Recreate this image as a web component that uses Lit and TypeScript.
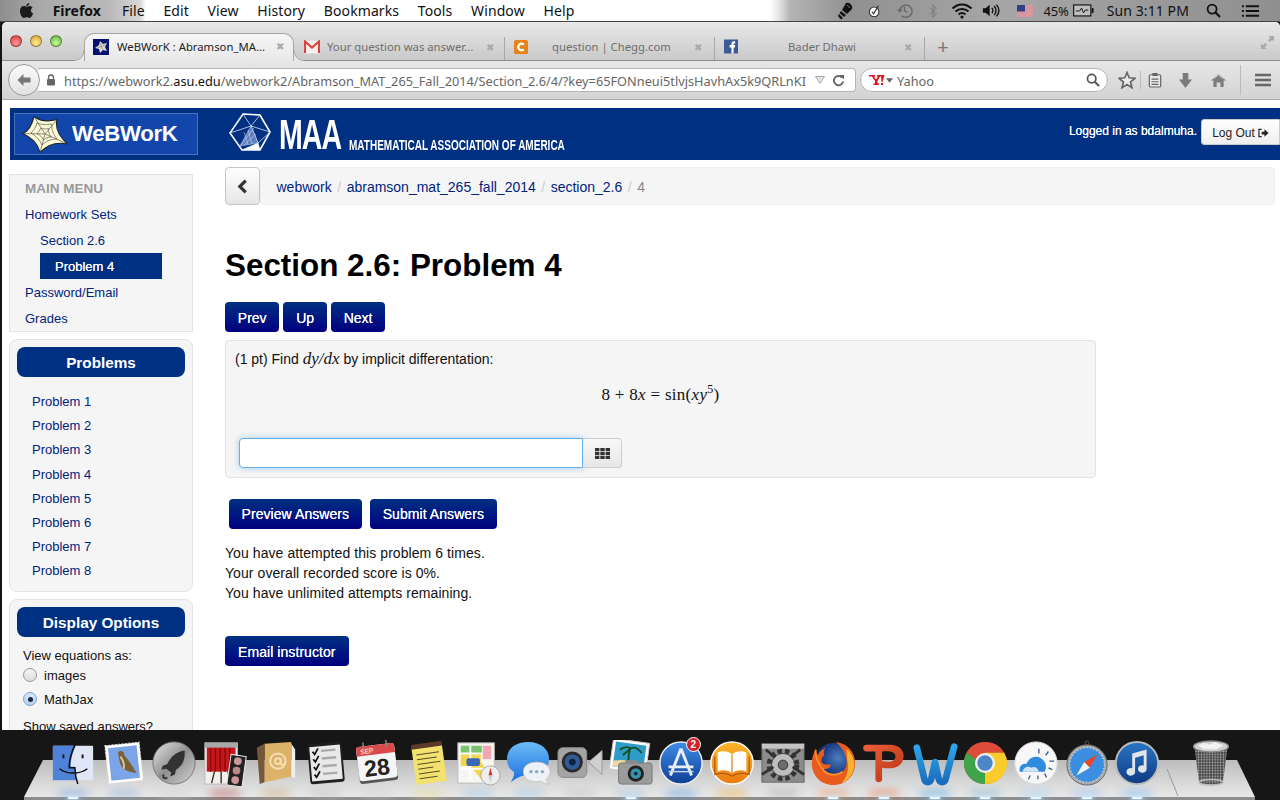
import { LitElement, html, css, svg } from "lit";
import { customElement } from "lit/decorators.js";

const x = (cls = "") => html`<span class="tabx ${cls}">✖</span>`;

const star = html`<svg class="star" viewBox="0 0 46 37" width="46" height="37">
  <path d="M.5 17.500 C6 15.500 10 9 12 .5 C18 5 26 6 35 3.500 C33 11 37 20 45.500 28 C36 26 26 28 18 36.500 C16 28 9 21 .5 17.500Z" fill="#fbf8d4" stroke="#1c2430" stroke-width="1.100"/>
  <path d="M.5 17.500 L23 18 M12 .5 L23 18 M35 3.500 L23 18 M45.500 28 L23 18 M18 36.500 L23 18" fill="none" stroke="#444" stroke-width=".6"/>
  <path d="M9 17 C12 14 14 11 15 7 C20 9 24 9 30 8 C29 13 31 18 35 23 C29 23 24 25 20 29 C18 24 14 20 9 17Z M15 17.500 C17 16 18 14 18.500 12.500 C21 13 24 13 26.500 12.500 C26 15 27 18 29 21 C26 21 24 22 21.500 24 C20 21 18 19 15 17.500Z" fill="none" stroke="#444" stroke-width=".6"/>
</svg>`;

const maaPoly = html`<svg viewBox="0 0 44 44" width="44" height="44">
  <path d="M15 2 L32 3 L42 20 L32 38 L14 38 L2 21Z" fill="none" stroke="#fff" stroke-width="1.600"/>
  <path d="M15 2 L23 14 L42 20 M23 14 L2 21 M23 14 L30 31 L42 20 M30 31 L14 38 M30 31 L32 38 M15 2 L2 21 M32 3 L23 14 M2 21 L14 38" fill="none" stroke="#d4def0" stroke-width=".8"/>
  <path d="M23 14 L30 31 L12 34 Z M26 16 L13 33 M28 22 L16 33 M20 18 L24 32 M16 20 L20 33" fill="#5f7fc0" stroke="#dbe3f2" stroke-width=".5"/>
  <path d="M14 38 L30 31 L32 38Z" fill="#fff"/>
</svg>`;

const apple = html`<svg viewBox="0 0 16 18" width="15" height="17"><path d="M11 1c0 2-1.600 3.500-3.300 3.400C7.600 2.600 9.300 1.100 11 1zM8 5c1 0 2-.9 3.400-.9 1.200 0 2.400.6 3.100 1.700-2.700 1.600-2.200 5.300.6 6.400-.7 2-2.300 4.700-4 4.700-1 0-1.500-.7-2.800-.7s-1.900.7-2.900.7C3.400 16.900 1 13 1 9.700 1 6.400 3.100 4.300 5.200 4.300 6.400 4.300 7.200 5 8 5z" fill="#1b1b1b"/></svg>`;

const statusIcons = [
  html`<svg viewBox="0 0 18 18" width="18" height="18"><path d="M9 1 C12 0 16 3 15 7 L10 12 L5 8Z" fill="#111"/><path d="M4 9 L9 13 L7 15 L2.500 11Z M2 12 L6 16 L4 17.500 L1 14Z" fill="#111"/><path d="M10 3 L13 6" stroke="#999" stroke-width=".8"/></svg>`,
  html`<svg viewBox="0 0 16 16" width="14" height="14"><circle cx="7" cy="9" r="5.500" fill="#f4f4f4" stroke="#333" stroke-width="1.200"/><path d="M4.500 9 L6.500 11 L12 2" fill="none" stroke="#333" stroke-width="1.400"/></svg>`,
  html`<svg viewBox="0 0 18 18" width="17" height="17"><path d="M4 9 A6.500 6.500 0 1 1 6 14.500" fill="none" stroke="#666" stroke-width="1.500"/><path d="M9 5 V9.500 L12 11" fill="none" stroke="#666" stroke-width="1.300"/><path d="M1 8 L4 11 L7 8Z" fill="#666"/></svg>`,
  html`<svg viewBox="0 0 10 18" width="9" height="16"><path d="M1 5 L8 12 L4.500 16 V2 L8 6 L1 13" fill="none" stroke="#777" stroke-width="1.100"/></svg>`,
  html`<svg viewBox="0 0 22 16" width="22" height="16"><path d="M1.500 5.500 C7 0 15 0 20.500 5.500 M4.500 8.500 C8 5 14 5 17.500 8.500 M7.500 11.500 C9.500 9.800 12.500 9.800 14.500 11.500" fill="none" stroke="#111" stroke-width="2"/><circle cx="11" cy="14" r="1.600" fill="#111"/></svg>`,
  html`<svg viewBox="0 0 20 16" width="18" height="15"><path d="M1 5.500 H4 L8.500 1.500 V14.500 L4 10.500 H1Z" fill="#111"/><path d="M11 5 C12.500 7 12.500 9 11 11 M13.500 3 C16 6 16 10 13.500 13 M16 1.500 C19.500 5.500 19.500 10.500 16 14.500" fill="none" stroke="#111" stroke-width="1.500"/></svg>`,
];

const flag = html`<svg viewBox="0 0 16 12" width="16" height="12"><rect width="16" height="12" fill="#f4f4f4"/><path d="M0 1h16M0 3h16M0 5h16M0 7h16M0 9h16M0 11h16" stroke="#c0394b" stroke-width="1"/><rect width="8" height="6.500" fill="#2f3f85"/></svg>`;
const battery = html`<svg viewBox="0 0 22 13" width="21" height="13"><rect x=".7" y=".7" width="18" height="11.500" fill="#eee" fill-opacity=".4" stroke="#111" stroke-width="1.200"/><rect x="19.500" y="4" width="2" height="5" fill="#111"/><path d="M3 7 H7 L9 4 L11 9 L13 6 H16" fill="none" stroke="#111" stroke-width="1"/></svg>`;
const searchBlack = html`<svg viewBox="0 0 16 16" width="15" height="15"><circle cx="6.500" cy="6.500" r="4.800" fill="none" stroke="#111" stroke-width="1.900"/><path d="M10 10 L15 15" stroke="#111" stroke-width="2.300"/></svg>`;
const listIcon = html`<svg viewBox="0 0 20 14" width="19" height="14"><path d="M1 2h2M1 7h2M1 12h2M5 2h14M5 7h14M5 12h14" stroke="#111" stroke-width="2.200"/></svg>`;

const favWeb = html`<svg viewBox="0 0 16 16" width="16" height="16"><rect width="16" height="16" fill="#06106e"/><path d="M2 9 L6 6 L7 2 L10 5 L14 4 L12 8 L14 12 L10 11 L7 14 L6 10Z" fill="#dcdccc"/><path d="M4 9 L12 6 M7 4 L10 11" stroke="#666" stroke-width=".5"/></svg>`;
const favGmail = html`<svg viewBox="0 0 16 14" width="16" height="14"><rect x=".5" y=".5" width="15" height="13" fill="#f4f1ee" stroke="#ddd"/><path d="M1 13 V1.500 L8 7.500 L15 1.500 V13" fill="none" stroke="#d9463d" stroke-width="2.200"/></svg>`;
const favChegg = html`<svg viewBox="0 0 15 15" width="14" height="14"><rect width="15" height="15" rx="2" fill="#e8831a"/><path d="M10.500 5 A3.500 3.500 0 1 0 10.500 10" fill="none" stroke="#fff" stroke-width="2.400"/></svg>`;
const favFb = html`<svg viewBox="0 0 15 15" width="14" height="15"><rect width="15" height="15" fill="#3b5a9a"/><path d="M8 15 V8.500 H6 V6 H8 V4.500 C8 2.800 9 2 10.500 2 H12 V4.300 H11 C10.400 4.300 10.300 4.600 10.300 5 V6 H12 L11.700 8.500 H10.300 V15Z" fill="#fff"/></svg>`;
const fullscreen = html`<svg viewBox="0 0 16 16" width="15" height="15"><path d="M9 1 H15 V7 L13 5 L10.500 7.500 L8.500 5.500 L11 3Z M7 15 H1 V9 L3 11 L5.500 8.500 L7.500 10.500 L5 13Z" fill="#a9a9a9"/></svg>`;

const backArrow = html`<svg viewBox="0 0 16 16" width="16" height="16"><path d="M7.500 2 L1.500 8 L7.500 14 V10.500 H14.500 V5.500 H7.500Z" fill="#777"/></svg>`;
const lock = html`<svg viewBox="0 0 10 12" width="10" height="12"><path d="M2.500 5 V3.500 A2.500 2.500 0 0 1 7.500 3.500 V5" fill="none" stroke="#666" stroke-width="1.300"/><rect x="1" y="5" width="8" height="6.500" rx="1" fill="#666"/></svg>`;
const dropTri = html`<svg viewBox="0 0 10 8" width="10" height="8"><path d="M.5 .5 H9.500 L5 7.500Z" fill="#e4e4e4" stroke="#aaa"/></svg>`;
const reload = html`<svg viewBox="0 0 14 14" width="13" height="13"><path d="M11 4 A5 5 0 1 0 12 8" fill="none" stroke="#666" stroke-width="2"/><path d="M8 1 L13 1 L13 6Z" fill="#666"/></svg>`;
const yahoo = html`<svg viewBox="0 0 16 10" width="16" height="10"><path d="M0 0 H6 V1.500 H5 L7 4.500 L9 1.500 H8 V0 H12 V1.500 H11 L8.500 6 V8.500 H10 V10 H4.500 V8.500 H6 V6 L3 1.500 H0Z" fill="#d8141c"/><path d="M12 0 H15.500 L13.500 7 H12.500Z" fill="#d8141c"/><rect x="12" y="8" width="2" height="2" fill="#d8141c"/></svg>`;
const yahooCaret = html`<svg viewBox="0 0 8 5" width="7" height="5"><path d="M0 0 H8 L4 5Z" fill="#666"/></svg>`;
const searchGrey = html`<svg viewBox="0 0 16 16" width="14" height="14"><circle cx="6.500" cy="6.500" r="4.800" fill="none" stroke="#555" stroke-width="2"/><path d="M10 10 L15 15" stroke="#555" stroke-width="2.400"/></svg>`;
const starIcon = html`<svg viewBox="0 0 18 18" width="18" height="18"><path d="M9 1.500 L11.200 6.800 L17 7.200 L12.500 11 L14 16.700 L9 13.600 L4 16.700 L5.500 11 L1 7.200 L6.800 6.800Z" fill="#ececec" stroke="#666" stroke-width="1.700"/></svg>`;
const clipboard = html`<svg viewBox="0 0 16 18" width="14" height="16"><rect x="1.500" y="3" width="13" height="14" rx="1.500" fill="#e8e8e8" stroke="#666" stroke-width="1.400"/><rect x="5" y="1" width="6" height="3.500" fill="#666"/><path d="M4 8h8M4 11h8M4 14h8" stroke="#666" stroke-width="1.300"/></svg>`;
const download = html`<svg viewBox="0 0 16 18" width="15" height="17"><path d="M5 1 H11 V8 H15 L8 17 L1 8 H5Z" fill="#7a7a7a"/></svg>`;
const home = html`<svg viewBox="0 0 18 16" width="17" height="15"><path d="M9 1 L1 8 H3.500 V15 H7 V10 H11 V15 H14.500 V8 H17Z" fill="#7d7d7d"/><path d="M4 6 L9 2 L14 6" stroke="#e8e8e8" fill="none" stroke-width=".8"/></svg>`;
const burger = html`<svg viewBox="0 0 16 14" width="16" height="14"><path d="M0 2h16M0 7h16M0 12h16" stroke="#666" stroke-width="2.400"/></svg>`;

const d = (body: unknown) => html`<svg viewBox="0 0 48 48" width="46" height="46">${body}</svg>`;
const dockIcons = [
  { c: "#5a8fd8", on: true, i: d(svg`<rect x="3" y="6" width="42" height="36" rx="1" fill="#dfe6f6"/><path d="M3 6 H27 C23 14 21 23 22 28 H26 C26 34 27 38 28 42 H3Z" fill="#4f83d8"/><path d="M27 3 C22 13 20 22 20 29 H26 C26 35 27 40 29 46" fill="none" stroke="#111" stroke-width="1.600"/><path d="M14 15 v4 M34 15 v4" stroke="#111" stroke-width="2"/><path d="M10 30 C17 36 31 36 39 30" fill="none" stroke="#111" stroke-width="1.500"/>`) },
  { c: "#7aa2e0", on: false, i: d(svg`<g transform="rotate(-6 24 24)"><rect x="6" y="4" width="36" height="40" fill="#fff" stroke="#ddd" stroke-dasharray="2 1.500"/><rect x="9" y="7" width="30" height="34" fill="#7ba5e6"/><path d="M19 12 C23 10 26 12 25 16 C30 22 33 30 36 36 C30 34 26 33 23 30 C20 28 19 20 19 12Z" fill="#7b6038"/><path d="M21 17 C24 22 24 27 23 30" stroke="#d6c7a5" stroke-width="2" fill="none"/></g>`) },
  { c: "#ccc", on: false, i: d(svg`<defs><linearGradient id="lp" x1="0" y1="0" x2="1" y2="1"><stop offset="0" stop-color="#e8e8e8"/><stop offset=".5" stop-color="#8f8f8f"/><stop offset="1" stop-color="#d4d4d4"/></linearGradient></defs><circle cx="24" cy="24" r="22" fill="url(#lp)" stroke="#777"/><path d="M35 11 C27 12 21 17 17 25 L12 27 L11 31 L16 30 L21 34 L20 38 L25 36 L26 31 C33 27 36 20 35 11Z" fill="#333"/><path d="M13 36 C12 40 15 41 17 39" fill="none" stroke="#333" stroke-width="2"/>`) },
  { c: "#a33", on: false, i: d(svg`<rect x="3" y="3" width="34" height="43" fill="#f0f0ee" stroke="#bbb"/><rect x="5" y="7" width="30" height="26" fill="#c8171b"/><path d="M9 7v26M14 7v26M19 7v26M24 7v26M29 7v26" stroke="#87090c" stroke-width="1.500"/><rect x="3" y="3" width="34" height="5" fill="#a8a8a8"/><path d="M13 33 L10 45 M27 33 L30 45 M20 33 V45" stroke="#432" stroke-width="1.500"/><g transform="rotate(8 36 32)"><rect x="28" y="16" width="16" height="32" fill="#222" stroke="#eee"/><circle cx="36" cy="22" r="4" fill="#c99"/><circle cx="36" cy="32" r="4" fill="#b88"/><circle cx="36" cy="42" r="4" fill="#c99"/></g>`) },
  { c: "#c9a05c", on: false, i: d(svg`<path d="M12 4 L40 2 V38 L12 44 Z" fill="#dcb269"/><path d="M4 8 L12 4 V44 L7 46 Z" fill="#75583c"/><path d="M40 4 L44 10 V40 L40 38Z" fill="#eee"/><circle cx="26" cy="22" r="8" fill="none" stroke="#f3dfb3" stroke-width="2"/><circle cx="26" cy="22" r="3" fill="none" stroke="#f3dfb3" stroke-width="2"/><path d="M29 19 V25 C31 27 34 25 34 22" fill="none" stroke="#f3dfb3" stroke-width="2"/>`) },
  { c: "#bbb", on: false, i: d(svg`<g transform="rotate(-5 24 24)"><rect x="6" y="3" width="36" height="42" rx="3" fill="#1e1e1e"/><rect x="8" y="6" width="32" height="36" fill="#e9e9e9"/><path d="M20 11h15M20 19h15M20 27h15M20 35h15" stroke="#aaa" stroke-width="2.500"/><path d="M11 11 l2 3 l4 -6 M11 19 l2 3 l4 -6 M11 27 l2 3 l4 -6 M11 35 l2 3 l4 -6" fill="none" stroke="#111" stroke-width="1.800"/></g>`) },
  { c: "#ccc", on: false, i: d(svg`<g transform="rotate(-7 24 24)"><rect x="4" y="6" width="40" height="38" rx="3" fill="#555"/><rect x="4" y="5" width="40" height="36" rx="3" fill="#f5f5f5"/><path d="M4 15 V8 a3 3 0 0 1 3 -3 H41 a3 3 0 0 1 3 3 V15Z" fill="#d94b4b"/><path d="M12 1v7M36 1v7" stroke="#888" stroke-width="1.500"/><text x="8" y="13" font-size="7" fill="#fff" font-family="Liberation Sans">SEP</text><text x="10" y="37" font-size="24" font-weight="700" fill="#222" font-family="Liberation Sans">28</text></g>`) },
  { c: "#e8d97a", on: false, i: d(svg`<g transform="rotate(-8 24 24)"><rect x="9" y="7" width="32" height="38" fill="#f4e26e"/><rect x="9" y="3" width="32" height="5" fill="#5b3a2a"/><path d="M13 14h24M13 19h21M13 24h24M13 29h16M13 34h22M13 39h19" stroke="#564f2a" stroke-width="1"/></g>`) },
  { c: "#8bc1e8", on: false, i: d(svg`<rect x="3" y="3" width="38" height="42" fill="#f6f6f2" stroke="#bbb"/><rect x="6" y="6" width="22" height="7" fill="#79c46c"/><rect x="29" y="6" width="9" height="14" fill="#f2a7b5"/><path d="M6 15 H27 V23 L37 36 V42 H28 L16 27 H6Z" fill="#f3d64b"/><path d="M16 6 V42 M6 30 H30" stroke="#fff" stroke-width="2"/><rect x="12" y="19" width="14" height="8" rx="2" fill="#3a68b8"/><circle cx="37" cy="37" r="10" fill="#eee" stroke="#aaa"/><path d="M37 29 L39 37 H35Z" fill="#d8332a"/><path d="M37 45 L39 37 H35Z" fill="#ccc"/>`) },
  { c: "#8bc1e8", on: false, i: d(svg`<defs><linearGradient id="ms" x1="0" y1="0" x2="0" y2="1"><stop offset="0" stop-color="#6cbcf7"/><stop offset="1" stop-color="#1a6fdb"/></linearGradient></defs><path d="M23 2 C36 2 45 9 45 20 C45 31 35 37 22 37 C17 37 13 38 5 44 C8 39 9 36 8 33 C3 30 1 25 1 20 C1 9 10 2 23 2Z" fill="url(#ms)"/><path d="M32 23 C40 23 46 27 46 33 C46 37 44 39 42 41 C42 43 43 45 45 46 C41 46 39 45 37 43 C28 45 18 42 18 33 C18 27 24 23 32 23Z" fill="#eef1f5" stroke="#bbb" stroke-width=".7"/><circle cx="26" cy="33" r="1.800" fill="#8ca9c9"/><circle cx="32" cy="33" r="1.800" fill="#8ca9c9"/><circle cx="38" cy="33" r="1.800" fill="#8ca9c9"/>`) },
  { c: "#bbb", on: false, i: d(svg`<rect x="1" y="8" width="30" height="31" rx="5" fill="#a4a4a4" stroke="#888"/><circle cx="16" cy="23" r="11" fill="#2a2a2a"/><circle cx="16" cy="23" r="8" fill="#2f5c97"/><circle cx="16" cy="23" r="3.500" fill="#0c2343"/><path d="M33 23 L47 11 V36Z" fill="#cfcfcf" stroke="#999"/>`) },
  { c: "#9bd", on: true, i: d(svg`<g transform="rotate(8 24 20)"><rect x="3" y="1" width="38" height="32" fill="#fff" stroke="#ccc"/><rect x="6" y="4" width="32" height="26" fill="#2f9bc9"/><path d="M6 24 C16 21 28 21 38 24 V30 H6Z" fill="#e9d9a0"/><path d="M22 24 C21 18 20 13 22 9 M22 9 C18 7 14 9 11 12 M22 9 C26 6 30 8 34 12 M22 9 C20 12 17 15 15 17" stroke="#14501f" stroke-width="2" fill="none"/></g><rect x="11" y="24" width="35" height="22" rx="3" fill="#9b9b9b" stroke="#777"/><rect x="18" y="21" width="12" height="4" fill="#8a8a8a"/><circle cx="29" cy="35" r="8.500" fill="#222"/><circle cx="29" cy="35" r="5.500" fill="#3a93ad"/><circle cx="29" cy="35" r="2" fill="#0b2c40"/>`) },
  { c: "#3b8de0", on: false, i: d(svg`<defs><linearGradient id="as" x1="0" y1="0" x2="0" y2="1"><stop offset="0" stop-color="#3d8de8"/><stop offset="1" stop-color="#103e96"/></linearGradient></defs><circle cx="24" cy="24" r="22" fill="url(#as)" stroke="#eee" stroke-width="1.500"/><path d="M24 9 L13 37 M24 9 L35 37 M11 28 H37" stroke="#e7eef7" stroke-width="3" fill="none"/><path d="M11 33 H37" stroke="#cad6e6" stroke-width="1.500"/>`) },
  { c: "#f5a020", on: false, i: d(svg`<defs><linearGradient id="ib" x1="0" y1="0" x2="0" y2="1"><stop offset="0" stop-color="#fbb62a"/><stop offset="1" stop-color="#ea7a10"/></linearGradient></defs><circle cx="24" cy="24" r="22" fill="url(#ib)" stroke="#fff" stroke-width="1.500"/><path d="M24 15 C20 11 14 11 9 13 V33 C14 31 20 31 24 35 C28 31 34 31 39 33 V13 C34 11 28 11 24 15Z" fill="#fff"/><path d="M24 15 V35" stroke="#d8751a" stroke-width="1.200"/><path d="M6 17 V36 C13 34 19 34 24 38 C29 34 35 34 42 36 V17" fill="none" stroke="#b35a10" stroke-width="1.200"/>`) },
  { c: "#999", on: false, i: d(svg`<rect x="2" y="4" width="44" height="40" fill="#8c8c8c" stroke="#666"/><rect x="2" y="4" width="44" height="5" fill="#c4c4c4"/><circle cx="24" cy="26" r="14" fill="none" stroke="#333" stroke-width="6" stroke-dasharray="4.500 3"/><circle cx="24" cy="26" r="12" fill="#bdbdbd" stroke="#444"/><circle cx="24" cy="26" r="5" fill="#6c6c6c" stroke="#333"/><path d="M2 36 L14 28 M46 36 L34 28 M6 10 L16 18 M42 10 L32 18" stroke="#333" stroke-width="3"/>`) },
  { c: "#f08040", on: true, i: d(svg`<defs><radialGradient id="ff" cx=".6" cy=".4" r=".7"><stop offset="0" stop-color="#4c7ec0"/><stop offset=".55" stop-color="#1d3e85"/><stop offset="1" stop-color="#0f2458"/></radialGradient></defs><circle cx="25" cy="23" r="20" fill="url(#ff)"/><path d="M27 2 C38 3 48 12 47 26 C46 39 36 47 24 47 C11 47 1 36 2 23 C2 18 4 13 6 10 C6 13 7 15 8 16 C10 12 13 10 16 8 C14 12 14 14 15 16 C12 18 11 22 13 24 C15 26 18 26 21 25 C23 29 17 31 13 30 C17 37 28 38 34 33 C41 27 40 14 27 2Z" fill="#ea5b1f"/><path d="M38 9 C45 15 48 24 45 32 C43 38 38 43 33 45 C39 38 41 30 39 22 Z" fill="#f6b331"/><path d="M6 10 C5 20 10 26 13 30 C17 37 28 38 34 33" fill="none" stroke="#f4922a" stroke-width="2"/>`) },
  { c: "#e25a28", on: true, i: d(svg`<defs><linearGradient id="pp" x1="0" y1="0" x2="1" y2="1"><stop offset="0" stop-color="#f0603a"/><stop offset="1" stop-color="#b73213"/></linearGradient></defs><path d="M6 5 H30 C42 5 46 13 44 20 C42 28 34 31 22 29 L22 41 C22 45 15 45 15 41 L15 12 H6 C1 12 1 5 6 5Z M22 12 V22 C31 24 36 22 36 17 C36 13 31 11 22 12Z" fill="url(#pp)"/>`) },
  { c: "#2f9be0", on: true, i: d(svg`<defs><linearGradient id="ww" x1="0" y1="0" x2="0" y2="1"><stop offset="0" stop-color="#2ba5e8"/><stop offset="1" stop-color="#1a6cbc"/></linearGradient></defs><path d="M5 8 L13 41 C14 45 19 45 20 41 L24 23 L28 41 C29 45 34 45 35 41 L44 7" fill="none" stroke="url(#ww)" stroke-width="7" stroke-linecap="round" stroke-linejoin="round"/>`) },
  { c: "#6ac", on: true, i: d(svg`<circle cx="24" cy="24" r="22" fill="#dd4b39"/><path d="M24 24 L5 13 A22 22 0 0 0 24 46 Z" fill="#3fa34a"/><path d="M24 24 L24 46 A22 22 0 0 0 44 13 H24Z" fill="#f9cc2c"/><path d="M24 2 A22 22 0 0 1 44 13 H24 L14 20 L5 13 A22 22 0 0 1 24 2Z" fill="#dd4b39"/><circle cx="24" cy="24" r="10.500" fill="#f0f0f0"/><circle cx="24" cy="24" r="8" fill="#4b86c8"/>`) },
  { c: "#9cf", on: true, i: d(svg`<circle cx="24" cy="24" r="22" fill="#f7f7f7" stroke="#ddd"/><path d="M27 14 V9 M34 16 L37 12 M38 22 H43 M37 29 L41 31 M33 35 L35 39 M26 37 V41 M18 37 L16 41" stroke="#3f5d82" stroke-width="1.400"/><path d="M7 33 C6 27 10 24 14 25 C16 19 23 15 29 19 C34 22 36 28 33 33Z" fill="#2e8be0"/><path d="M10 33 C11 28 16 27 19 29 C22 27 26 29 27 33Z" fill="#cfe4f7"/>`) },
  { c: "#8bf", on: true, i: d(svg`<circle cx="24" cy="26" r="21" fill="#aaa" stroke="#666"/><circle cx="24" cy="26" r="18" fill="#3c8ee0"/><circle cx="24" cy="26" r="18" fill="none" stroke="#dfe8f3" stroke-width="1.200" stroke-dasharray="1 2.500"/><path d="M35 15 L21 23 L27 29Z" fill="#e8472b"/><path d="M13 37 L21 23 L27 29Z" fill="#f2f2f2"/><circle cx="24" cy="3" r="2" fill="none" stroke="#555"/>`) },
  { c: "#6af", on: true, i: d(svg`<defs><linearGradient id="it" x1="0" y1="0" x2="0" y2="1"><stop offset="0" stop-color="#2a75c7"/><stop offset="1" stop-color="#0f3a82"/></linearGradient></defs><circle cx="24" cy="24" r="22" fill="url(#it)" stroke="#bbb" stroke-width="2"/><path d="M19 14 L34 10 V30 A4.500 4 0 1 1 31 26.500 V16 L22 18.500 V33 A4.500 4 0 1 1 19 29.500Z" fill="#dfe4ea"/>`) },
];

const trash = html`<svg viewBox="0 0 48 52" width="44" height="48"><defs><pattern id="mesh" width="3" height="3" patternUnits="userSpaceOnUse"><rect width="3" height="3" fill="#444"/><circle cx="1.500" cy="1.500" r=".9" fill="#bbb"/></pattern></defs><path d="M6 9 L11 47 C14 51 34 51 37 47 L42 9Z" fill="url(#mesh)"/><ellipse cx="24" cy="8" rx="19" ry="6" fill="#cfcfcf" stroke="#888" stroke-width="1.500"/><path d="M10 7 L16 4 L22 6 L28 3 L38 7 L30 11 L16 11Z" fill="#f2f2f2"/><ellipse cx="24" cy="47" rx="13" ry="3" fill="none" stroke="#bbb" stroke-width="1.500"/></svg>`;

const tabs = [
  { fav: favGmail, t: "Your question was answer...", cls: "t-gmail" },
  { fav: favChegg, t: "question | Chegg.com", cls: "t-chegg" },
  { fav: favFb, t: "Bader Dhawi", cls: "t-fb" },
];

@customElement("app-root")
export class AppRoot extends LitElement {
  static styles = css`
    :host { display: block; width: 1280px; height: 800px; overflow: hidden; position: relative; background: #141414; font-family: "Liberation Sans", Arial, sans-serif; font-size: 14px; color: #111; }
    * { box-sizing: border-box; }
    svg { display: block; flex: none; }

    .menubar { height: 22px; display: flex; align-items: center; padding-left: 19px; font: 14px/22px "Noto Sans", sans-serif; color: #111;
      background: linear-gradient(90deg, #8d8d8d 0, #a9a9a9 40px, #b9b9b9 110px, #d8d8d8 140px, #fff 146px, #fff 770px, #e8e8e8 778px, #b5b5b5 790px, #909090 850px, #a6a6a6 1000px, #8f8f8f 1280px); border-bottom: 1px solid #444; }
    .menu-left { display: flex; align-items: center; }
    .apple { margin-right: 22px; }
    .menu-left span { margin-right: 18.700px; white-space: nowrap; letter-spacing: .1px; }
    .menu-left b { margin-right: 21px; font-weight: 700; }
    .menu-left .help { margin-right: 0; }
    .menu-right { margin-left: auto; display: flex; align-items: center; padding-right: 20px; }
    .st { display: flex; justify-content: center; width: 29px; }
    .menu-right .flag { margin-left: 11px; }
    .pct { margin-left: 11px; font-size: 13px; letter-spacing: -.2px; }
    .bat { margin-left: 4px; }
    .clock { margin-left: 13px; white-space: nowrap; font-size: 14px; letter-spacing: .1px; }
    .mag { margin-left: 17px; }
    .lst { margin-left: 20px; }

    .window { margin-left: 2px; height: 708px; overflow: hidden; background: #fff; border-radius: 5px 5px 0 0; display: flex; flex-direction: column; }
    .tabstrip { height: 39px; flex: none; display: flex; align-items: flex-end; padding-left: 82px; position: relative; background: linear-gradient(#e9e9e9, #c9c9c9); border-bottom: 1px solid #8f8f8f; font: 11.300px "Noto Sans", sans-serif; color: #6e6e6e; }
    .lights { position: absolute; left: 8px; top: 13px; display: flex; gap: 8px; }
    .lights i { width: 12px; height: 12px; border-radius: 50%; border: 1px solid rgba(0,0,0,.35); }
    .l1 { background: radial-gradient(circle at 50% 70%, #f99, #d8322c); }
    .l2 { background: radial-gradient(circle at 50% 70%, #fe9, #d99a20); }
    .l3 { background: radial-gradient(circle at 50% 70%, #cf9, #5aa838); }
    .tab { height: 23px; padding-bottom: 4px; display: flex; align-items: center; position: relative; white-space: nowrap; }
    .tab.active { width: 210px; height: 28px; margin-bottom: -1px; padding: 0 0 2px 8px; color: #222; background: linear-gradient(#f6f6f6, #e8e8e8); border: 1px solid #a5a5a5; border-bottom: 0; border-radius: 10px 10px 0 0; }
    .tab.active::before, .tab.active::after { content: ""; position: absolute; bottom: 0; width: 10px; height: 10px; }
    .tab.active::before { left: -11px; background: radial-gradient(circle at 0 0, transparent 9px, #a5a5a5 9.500px, #e8e8e8 10.500px); }
    .tab.active::after { right: -11px; background: radial-gradient(circle at 100% 0, transparent 9px, #a5a5a5 9.500px, #e8e8e8 10.500px); }
    .tab.active .ttl { margin-left: 8px; width: 160px; }
    .tabx { font-size: 10px; color: #aaa; line-height: 1; position: absolute; top: 50%; margin-top: -2px; transform: translateY(-50%); }
    .tab.active .tabx { left: 191px; }
    .ttl { overflow: hidden; }
    .tab.t-gmail { width: 211px; padding-left: 10px; border-right: 1px solid #a8a8a8; }
    .t-gmail .ttl { margin-left: 7px; width: 155px; }
    .t-gmail .tabx { left: 192px; }
    .tab.t-chegg { width: 210px; padding-left: 9px; border-right: 1px solid #a8a8a8; }
    .t-chegg .ttl { margin-left: 24px; width: 152px; }
    .t-chegg .tabx { left: 189px; }
    .tab.t-fb { width: 210px; padding-left: 9px; border-right: 1px solid #a8a8a8; }
    .t-fb .ttl { margin-left: 50px; width: 100px; }
    .t-fb .tabx { left: 189px; }
    .plus { width: 36px; height: 27px; display: flex; align-items: center; justify-content: center; font-size: 20px; color: #777; }
    .fs { position: absolute; right: 5px; top: 13px; }

    .toolbar { height: 39px; flex: none; display: flex; align-items: center; background: linear-gradient(#e7e7e7, #d3d3d3); border-bottom: 1px solid #a8a8a8; font: 12.760px "Noto Sans", sans-serif; color: #666; padding-left: 6px; }
    .back { width: 32px; height: 32px; border-radius: 50%; border: 1px solid #9a9a9a; background: linear-gradient(#fbfbfb, #e2e2e2); display: flex; align-items: center; justify-content: center; position: relative; z-index: 1; flex: none; }
    .urlbar { width: 818px; height: 24px; margin-left: -2px; background: #fff; border: 1px solid #b5b5b5; border-left: 0; border-radius: 0 4px 4px 0; display: flex; align-items: center; padding-left: 8px; flex: none; }
    .url { margin-left: 8px; white-space: nowrap; width: 745px; overflow: hidden; padding-top: 1px; }
    .url em { font-style: normal; color: #111; }
    .urlbar .tri { margin-left: 6px; }
    .urlbar .rl { margin-left: 7px; }
    .searchbar { width: 248px; height: 24px; margin-left: 4px; background: #fff; border: 1px solid #b5b5b5; border-radius: 12px; display: flex; align-items: center; padding: 0 7px 0 8px; flex: none; }
    .searchbar .yc { margin-left: 1px; }
    .searchbar .lbl { margin-left: 4px; flex: 1; padding-top: 1px; }
    .tools { display: flex; align-items: center; flex: none; }
    .tools .a { margin-left: 10px; }
    .tools .b { margin-left: 4px; padding-left: 7px; border-left: 1px solid #bbb; height: 18px; display: flex; align-items: center; }
    .tools .c { margin-left: 16px; }
    .tools .d { margin-left: 17px; }
    .tools .e { margin-left: 13px; padding-left: 14px; border-left: 1px solid #bbb; height: 30px; display: flex; align-items: center; }

    .page { flex: 1; min-height: 0; padding: 8px 0 0 8px; background: #fff; overflow: hidden; }
    .hdr { height: 52px; background: #003082; display: flex; align-items: center; padding-left: 4px; position: relative; }
    .wwbox { width: 184px; height: 42px; background: #1246ab; border: 1px solid #4a72bf; display: flex; align-items: center; padding-left: 7px; color: #fff; }
    .wwname { margin-left: 4px; font-size: 22.200px; font-weight: 700; letter-spacing: -.3px; white-space: nowrap; }
    .maa { margin-left: 30px; display: flex; align-items: center; color: #fff; }
    .maa-big { margin: 1px 0 0 7px; width: 62px; flex: none; font: 700 42px/44px "Liberation Sans", sans-serif; letter-spacing: -1.500px; transform: scaleX(.68); transform-origin: 0 50%; white-space: nowrap; }
    .maa-sub { margin: 22px 0 0 8px; width: 216px; flex: none; font: 700 14.500px/16px "Liberation Sans", sans-serif; white-space: nowrap; transform: scaleX(.69); transform-origin: 0 50%; }
    .login { margin-left: auto; align-self: flex-start; margin-top: 11px; display: flex; align-items: flex-start; color: #fff; font-size: 12px; text-shadow: 0 0 .6px #fff; white-space: nowrap; line-height: 24px; }
    .logout { margin-left: 4px; width: 79px; height: 26px; padding-top: 1px; background: linear-gradient(#fff, #eee); border: 1px solid #ccc; border-radius: 3px 0 0 3px; color: #222; font-size: 12px; text-shadow: none; display: flex; align-items: center; justify-content: center; gap: 3px; }

    .body { display: flex; align-items: flex-start; margin-left: -1px; }
    .side { width: 184px; flex: none; padding-top: 14px; font-size: 13px; }
    .well { background: #f5f5f5; border: 1px solid #e3e3e3; }
    .mainmenu { height: 158px; padding: 0 15px; }
    .mm { height: 26px; line-height: 26px; padding-top: 1px; color: #00247d; white-space: nowrap; }
    .mmh { color: #999; font-weight: 700; font-size: 13.500px; }
    .mm.sub { margin-left: 15px; }
    .mm.on { margin-left: 15px; width: 122px; background: #003082; color: #fff; padding-left: 15px; text-shadow: 0 0 .5px #fff; }
    .rbox { border-radius: 8px; padding: 7px; margin-top: 7px; }
    .pill { height: 30px; line-height: 31px; border-radius: 8px; background: #003082; color: #fff; text-align: center; font-size: 15.300px; font-weight: 700; }
    .plist { padding: 13px 0 0 15px; height: 207px; }
    .plist div { height: 24.200px; line-height: 24.200px; color: #00247d; white-space: nowrap; }
    .opts { height: 200px; }
    .opts .lab { margin: 10px 0 0 6px; line-height: 18px; height: 16px; color: #111; white-space: nowrap; }
    .opts .lab.saved { margin-top: 7px; }
    .radio { display: flex; align-items: center; height: 24px; margin-left: 6px; gap: 7px; color: #111; }
    .r { width: 14px; height: 14px; border-radius: 50%; border: 1px solid #999; background: linear-gradient(#f4f4f4, #ddd); flex: none; display: flex; align-items: center; justify-content: center; }
    .r.sel { border-color: #7f9fc9; background: linear-gradient(#d6e6fa, #b3d0f3); }
    .r.sel::after { content: ""; width: 5px; height: 5px; border-radius: 50%; background: #1a2a44; }

    .main { flex: 1; min-width: 0; padding: 7px 5px 0 32px; }
    .crumbs { display: flex; height: 38px; }
    .cback { width: 35px; height: 38px; border: 1px solid #c4c4c4; border-radius: 4px; background: linear-gradient(#fff, #e6e6e6); display: flex; align-items: center; justify-content: center; flex: none; }
    .cbar { flex: 1; background: #f5f5f5; border: 1px solid #eee; border-radius: 4px; display: flex; align-items: center; padding: 1px 0 0 15.500px; color: #00247d; white-space: nowrap; }
    .cbar i { font-style: normal; color: #ccc; padding: 0 5.500px; }
    .cbar u { text-decoration: none; color: #888; }
    h1 { margin: 42px 0 0; font-size: 31.400px; line-height: 38px; font-weight: 700; color: #000; white-space: nowrap; }
    .btn { height: 30px; padding: 1px 13px 0; display: inline-flex; align-items: center; color: #fff; border-radius: 4px; background: linear-gradient(#003082, #000080); border: 0; text-shadow: 0 0 .6px #fff; white-space: nowrap; }
    .nav { display: flex; gap: 4px; margin-top: 17px; }
    .nav .btn { padding: 1px 12.800px 0; }
    .prob { width: 871px; height: 138px; margin-top: 8px; background: #f5f5f5; border: 1px solid #e3e3e3; border-radius: 4px; padding: 8px 9px 0; }
    .pt { line-height: 20px; height: 20px; display: flex; align-items: baseline; white-space: pre; }
    .pt .m { font: italic 17px "Liberation Serif", serif; }
    .eq { text-align: center; margin-top: 14px; height: 24px; font: 17px/24px "Liberation Serif", serif; letter-spacing: .3px; white-space: pre; }
    .eq sup { font-size: 12px; line-height: 0; }
    .answer { display: flex; margin: 31px 0 0 4px; height: 30px; }
    .inp { width: 344px; height: 30px; background: #fff; border: 1px solid #66afe9; border-radius: 4px 0 0 4px; box-shadow: 0 0 6px rgba(102,175,233,.6); }
    .gridbtn { width: 39px; height: 30px; background: linear-gradient(#f8f8f8, #e6e6e6); border: 1px solid #ccc; border-left: 0; border-radius: 0 4px 4px 0; display: flex; align-items: center; justify-content: center; }
    .subs { display: flex; gap: 8px; margin: 21px 0 0 4px; letter-spacing: .07px; }
    .subs .btn { padding: 0 12.500px; }
    .subs .btn + .btn { padding: 0 13px; }
    .status { margin-top: 14px; line-height: 20px; color: #111; letter-spacing: .07px; }
    .status div { height: 20px; white-space: nowrap; }
    .mail { margin-top: 33px; letter-spacing: .07px; }

    .dock { height: 70px; position: relative; display: flex; padding: 10px 0 0 47.600px; background: #161616; }
    .shelf { position: absolute; inset: 0; }
    .di { width: 50.700px; height: 46px; position: relative; display: flex; justify-content: center; flex: none; }
    .glow { position: absolute; left: 50%; top: 50px; width: 34px; height: 7px; margin-left: -17px; border-radius: 50%; filter: blur(4px); opacity: .5; }
    .light { position: absolute; left: 50%; top: 57px; width: 10px; height: 2px; margin-left: -5px; background: #eaf6ff; box-shadow: 0 0 4px 1px #bfe6ff; }
    .badge { position: absolute; left: 30px; top: -3px; width: 15px; height: 15px; border-radius: 50%; background: #d2232a; border: 1px solid #fff; color: #fff; font-size: 10px; font-weight: 700; line-height: 13px; text-align: center; }
    .trash { margin-left: 23px; margin-top: -1px; }
  `;

  render() {
    return html`
      <div class="menubar">
        <div class="menu-left">
          <span class="apple">${apple}</span><b>Firefox</b>
          <span>File</span><span>Edit</span><span>View</span><span>History</span><span>Bookmarks</span><span>Tools</span><span>Window</span><span class="help">Help</span>
        </div>
        <div class="menu-right">
          ${statusIcons.map((s) => html`<span class="st">${s}</span>`)}
          <span class="flag">${flag}</span><span class="pct">45%</span><span class="bat">${battery}</span>
          <span class="clock">Sun 3:11 PM</span><span class="mag">${searchBlack}</span><span class="lst">${listIcon}</span>
        </div>
      </div>
      <div class="window">
        <div class="tabstrip">
          <div class="lights"><i class="l1"></i><i class="l2"></i><i class="l3"></i></div>
          <div class="tab active">${favWeb}<span class="ttl">WeBWorK : Abramson_MA...</span>${x()}</div>
          ${tabs.map((t) => html`<div class="tab ${t.cls}">${t.fav}<span class="ttl">${t.t}</span>${x()}</div>`)}
          <div class="plus">+</div>
          <span class="fs">${fullscreen}</span>
        </div>
        <div class="toolbar">
          <div class="back">${backArrow}</div>
          <div class="urlbar">${lock}
            <div class="url">https://webwork2.<em>asu.edu</em>/webwork2/Abramson_MAT_265_Fall_2014/Section_2.6/4/?key=65FONneui5tlvjsHavhAx5k9QRLnKI</div>
            <span class="tri">${dropTri}</span><span class="rl">${reload}</span>
          </div>
          <div class="searchbar">${yahoo}<span class="yc">${yahooCaret}</span><span class="lbl">Yahoo</span>${searchGrey}</div>
          <div class="tools">
            <span class="a">${starIcon}</span><span class="b">${clipboard}</span><span class="c">${download}</span><span class="d">${home}</span><span class="e">${burger}</span>
          </div>
        </div>
        <div class="page">
          <div class="hdr">
            <div class="wwbox">${star}<span class="wwname">WeBWorK</span></div>
            <div class="maa">${maaPoly}<span class="maa-big">MAA</span><span class="maa-sub">MATHEMATICAL ASSOCIATION OF AMERICA</span></div>
            <div class="login">Logged in as bdalmuha.<div class="logout">Log Out <svg viewBox="0 0 12 10" width="11" height="10"><path d="M4 1 H1 V9 H4" fill="none" stroke="#222" stroke-width="1.300"/><path d="M4 3.500 H7 V1 L11.500 5 L7 9 V6.500 H4Z" fill="#222"/></svg></div></div>
          </div>
          <div class="body">
            <div class="side">
              <div class="well mainmenu">
                <div class="mm mmh">MAIN MENU</div>
                <div class="mm">Homework Sets</div>
                <div class="mm sub">Section 2.6</div>
                <div class="mm on">Problem 4</div>
                <div class="mm">Password/Email</div>
                <div class="mm">Grades</div>
              </div>
              <div class="well rbox">
                <div class="pill">Problems</div>
                <div class="plist">${[1, 2, 3, 4, 5, 6, 7, 8].map((n) => html`<div>Problem ${n}</div>`)}</div>
              </div>
              <div class="well rbox opts">
                <div class="pill">Display Options</div>
                <div class="lab">View equations as:</div>
                <div class="radio"><span class="r"></span>images</div>
                <div class="radio"><span class="r sel"></span>MathJax</div>
                <div class="lab saved">Show saved answers?</div>
              </div>
            </div>
            <div class="main">
              <div class="crumbs">
                <div class="cback"><svg viewBox="0 0 10 14" width="11" height="15"><path d="M8 1.500 L2.500 7 L8 12.500" fill="none" stroke="#333" stroke-width="3"/></svg></div>
                <div class="cbar">webwork<i>/</i>abramson_mat_265_fall_2014<i>/</i>section_2.6<i>/</i><u>4</u></div>
              </div>
              <h1>Section 2.6: Problem 4</h1>
              <div class="nav"><span class="btn">Prev</span><span class="btn">Up</span><span class="btn">Next</span></div>
              <div class="prob">
                <div class="pt">(1 pt) Find <span class="m">dy/dx</span> by implicit differentation:</div>
                <div class="eq">8 + 8<i>x</i> = sin(<i>xy</i><sup>5</sup>)</div>
                <div class="answer">
                  <div class="inp"></div>
                  <div class="gridbtn"><svg viewBox="0 0 15 11" width="15" height="11"><path d="M0 0h4.400v3.200H0zM5.300 0h4.400v3.200H5.300zM10.600 0h4.400v3.200h-4.400zM0 3.900h4.400v3.200H0zM5.300 3.900h4.400v3.200H5.300zM10.600 3.900h4.400v3.200h-4.400zM0 7.800h4.400v3.200H0zM5.300 7.800h4.400v3.200H5.300zM10.600 7.800h4.400v3.200h-4.400z" fill="#333"/></svg></div>
                </div>
              </div>
              <div class="subs"><span class="btn">Preview Answers</span><span class="btn">Submit Answers</span></div>
              <div class="status">
                <div>You have attempted this problem 6 times.</div>
                <div>Your overall recorded score is 0%.</div>
                <div>You have unlimited attempts remaining.</div>
              </div>
              <div class="mail"><span class="btn">Email instructor</span></div>
            </div>
          </div>
        </div>
      </div>
      <div class="dock">
        <svg class="shelf" viewBox="0 0 1280 70" width="1280" height="70">
          <defs><linearGradient id="sh" x1="0" y1="0" x2="0" y2="1"><stop offset="0" stop-color="#bcbcbc"/><stop offset=".7" stop-color="#dcdcdc"/><stop offset="1" stop-color="#e8e8e8"/></linearGradient></defs>
          <path d="M43 30 H1237 L1255 67 H24Z" fill="url(#sh)"/>
          <path d="M24 67 H1255 V70 H24Z" fill="#8d8d8d"/>
          <path d="M1167 39 L1178 66" stroke="#999" stroke-width="1"/>
        </svg>
        ${dockIcons.map((it, i) => html`<div class="di">${it.i}<span class="glow" style="background:${it.c}"></span>${it.on ? html`<span class="light"></span>` : ""}${i === 12 ? html`<span class="badge">2</span>` : ""}</div>`)}
        <div class="di trash">${trash}</div>
      </div>
    `;
  }
}
